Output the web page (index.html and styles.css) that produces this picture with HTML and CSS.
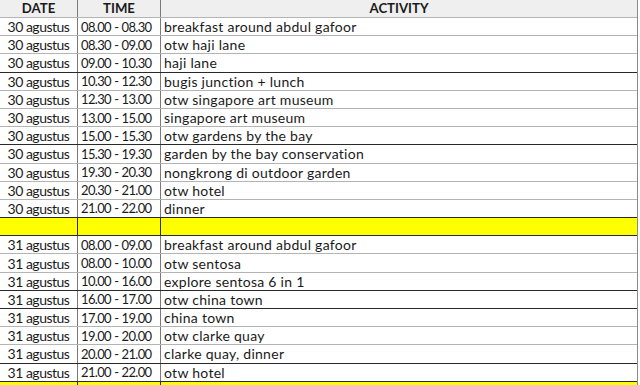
FILE: index.html
```html
<!DOCTYPE html>
<html>
<head>
<meta charset="utf-8">
<link rel="stylesheet" href="styles.css">
</head>
<body>
<div class="sheet">
  <div class="row head">
    <div class="c c1">DATE</div><div class="c c2">TIME</div><div class="c c3">ACTIVITY</div>
  </div>
  <div class="row"><div class="c c1">30 agustus</div><div class="c c2">08.00 - 08.30</div><div class="c c3">breakfast around abdul gafoor</div></div>
  <div class="row"><div class="c c1">30 agustus</div><div class="c c2">08.30 - 09.00</div><div class="c c3">otw haji lane</div></div>
  <div class="row dark"><div class="c c1">30 agustus</div><div class="c c2">09.00 - 10.30</div><div class="c c3">haji lane</div></div>
  <div class="row"><div class="c c1">30 agustus</div><div class="c c2">10.30 - 12.30</div><div class="c c3">bugis junction + lunch</div></div>
  <div class="row"><div class="c c1">30 agustus</div><div class="c c2">12.30 - 13.00</div><div class="c c3">otw singapore art museum</div></div>
  <div class="row"><div class="c c1">30 agustus</div><div class="c c2">13.00 - 15.00</div><div class="c c3">singapore art museum</div></div>
  <div class="row dark"><div class="c c1">30 agustus</div><div class="c c2">15.00 - 15.30</div><div class="c c3">otw gardens by the bay</div></div>
  <div class="row"><div class="c c1">30 agustus</div><div class="c c2">15.30 - 19.30</div><div class="c c3">garden by the bay conservation</div></div>
  <div class="row"><div class="c c1">30 agustus</div><div class="c c2">19.30 - 20.30</div><div class="c c3">nongkrong di outdoor garden</div></div>
  <div class="row"><div class="c c1">30 agustus</div><div class="c c2">20.30 - 21.00</div><div class="c c3">otw hotel</div></div>
  <div class="row dark"><div class="c c1">30 agustus</div><div class="c c2">21.00 - 22.00</div><div class="c c3">dinner</div></div>
  <div class="row dark sep"><div class="c c1"></div><div class="c c2"></div><div class="c c3"></div></div>
  <div class="row"><div class="c c1">31 agustus</div><div class="c c2">08.00 - 09.00</div><div class="c c3">breakfast around abdul gafoor</div></div>
  <div class="row"><div class="c c1">31 agustus</div><div class="c c2">08.00 - 10.00</div><div class="c c3">otw sentosa</div></div>
  <div class="row dark"><div class="c c1">31 agustus</div><div class="c c2">10.00 - 16.00</div><div class="c c3">explore sentosa 6 in 1</div></div>
  <div class="row dark"><div class="c c1">31 agustus</div><div class="c c2">16.00 - 17.00</div><div class="c c3">otw china town</div></div>
  <div class="row"><div class="c c1">31 agustus</div><div class="c c2">17.00 - 19.00</div><div class="c c3">china town</div></div>
  <div class="row"><div class="c c1">31 agustus</div><div class="c c2">19.00 - 20.00</div><div class="c c3">otw clarke quay</div></div>
  <div class="row dark"><div class="c c1">31 agustus</div><div class="c c2">20.00 - 21.00</div><div class="c c3">clarke quay, dinner</div></div>
  <div class="row dark"><div class="c c1">31 agustus</div><div class="c c2">21.00 - 22.00</div><div class="c c3">otw hotel</div></div>
  <div class="row dark sep"><div class="c c1"></div><div class="c c2"></div><div class="c c3"></div></div>
</div>
</body>
</html>
```
FILE: styles.css
```css
html, body {
  margin: 0;
  padding: 0;
  background: #ffffff;
  overflow: hidden;
}
.sheet {
  width: 638px;
  border-right: 1px solid #8a8a8a;
  box-sizing: border-box;
  font-family: "Lato", "Liberation Sans", sans-serif;
  font-size: 14px;
  color: #1a1a1a;
}
.row {
  display: grid;
  grid-template-columns: 78px 83px 1fr;
  height: 18.2px;
  box-sizing: border-box;
  border-bottom: 1px solid #b4b4b4;
}
.row.head {
  height: 18px;
  background: #efefef;
  font-weight: bold;
}
.row.dark {
  border-bottom-color: #2a2a2a;
}
.row.sep {
  background: #ffff00;
}
.c {
  display: flex;
  align-items: center;
  white-space: nowrap;
  overflow: hidden;
  line-height: 1;
  padding-top: 1px;
}
.c1 {
  justify-content: center;
  border-right: 1px solid #7a7a7a;
  letter-spacing: -0.5px;
}
.c2 {
  padding-left: 3px;
  border-right: 1px solid #7a7a7a;
  font-size: 13px;
  letter-spacing: -0.65px;
  word-spacing: 0.5px;
}
.c3 {
  padding-left: 3px;
  letter-spacing: 0.28px;
}
.head .c {
  justify-content: center;
  padding-left: 0;
  font-size: 13.2px;
  letter-spacing: 0;
  word-spacing: 0;
}
.sep .c1, .sep .c2 {
  border-right-color: #2a2a2a;
}
```
